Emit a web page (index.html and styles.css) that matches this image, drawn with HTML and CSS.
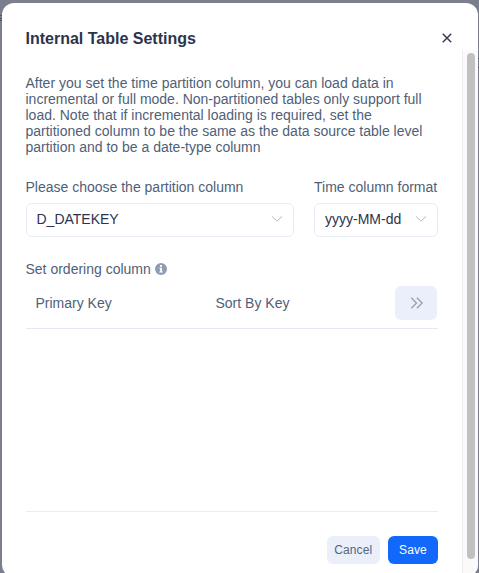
FILE: index.html
```html
<!DOCTYPE html>
<html lang="en">
<head>
<meta charset="utf-8">
<title>Internal Table Settings</title>
<link rel="stylesheet" href="styles.css">
</head>
<body>
<div class="dialog">
  <header class="header">
    <h1 class="title">Internal Table Settings</h1>
    <button class="close" aria-label="Close"><svg width="10" height="10" viewBox="0 0 10 10"><path d="M.8.8l8.4 8.4M9.2.8L.8 9.2"/></svg></button>
  </header>
  <div class="body">
    <main class="content">
      <p class="intro">After you set the time partition column, you can load data in<br>incremental or full mode. Non-partitioned tables only support full<br>load. Note that if incremental loading is required, set the<br>partitioned column to be the same as the data source table level<br>partition and to be a date-type column</p>
      <div class="fields">
        <div class="field">
          <label class="label">Please choose the partition column</label>
          <div class="select"><span>D_DATEKEY</span><svg width="12" height="8" viewBox="0 0 12 8"><path d="M.8 1.2L6 6.2l5.2-5"/></svg></div>
        </div>
        <div class="field">
          <label class="label">Time column format</label>
          <div class="select"><span>yyyy-MM-dd</span><svg width="12" height="8" viewBox="0 0 12 8"><path d="M.8 1.2L6 6.2l5.2-5"/></svg></div>
        </div>
      </div>
      <div class="ordering"><span>Set ordering column</span><svg width="12" height="12" viewBox="0 0 12 12"><circle cx="6" cy="6" r="6"/><path d="M5 2h2v1.7H5zM4.4 4.8H7v3.7h.8v1H4.3v-1h.8V5.8h-.7z"/></svg></div>
      <div class="table-head">
        <span>Primary Key</span>
        <span>Sort By Key</span>
        <button class="expand" aria-label="Expand"><svg width="14" height="12" viewBox="0 0 14 12"><path d="M2.3.8L7.5 6l-5.2 5.2M7.9.8L13.1 6l-5.2 5.2"/></svg></button>
      </div>
      <footer class="footer">
        <button class="button cancel">Cancel</button>
        <button class="button save">Save</button>
      </footer>
    </main>
    <div class="scrollbar"><div class="thumb"></div></div>
  </div>
</div>
</body>
</html>
```
FILE: styles.css
```css
* { box-sizing: border-box; }
html { overflow: hidden; }
body {
  margin: 0;
  height: 573px;
  overflow: hidden;
  padding: 2.5px 1.5px 0;
  background:
    linear-gradient(#4c5265, #4c5265) 0 15px / 2px 1px no-repeat,
    linear-gradient(#4c5265, #4c5265) 0 18px / 2px 1px no-repeat,
    linear-gradient(#4c5265, #4c5265) 0 20px / 2px 1px no-repeat,
    linear-gradient(#4c5265, #4c5265) 100% 58px / 2px 1px no-repeat,
    linear-gradient(#4c5265, #4c5265) 100% 67px / 2px 1px no-repeat,
    #7b7f8d;
  font: 14px/16px "Liberation Sans", Arial, sans-serif;
  color: #4f5f78;
}
button { border: 0; padding: 0; font-family: inherit; }
svg { display: block; fill: none; flex: none; }
.dialog {
  width: 476px;
  height: 574px;
  background: #fff;
  border-radius: 12px;
  overflow: hidden;
}
.header {
  height: 47.5px;
  padding: 24px 26px 0 24px;
  display: flex;
  justify-content: space-between;
}
.title {
  margin: 0;
  font-size: 16px;
  line-height: 24px;
  font-weight: bold;
  color: #2c344d;
}
.close { height: 23px; background: none; }
.close svg { stroke: #363e59; stroke-width: 1.5; }
.body { display: flex; height: 526.5px; }
.content { width: 460.5px; padding: 25px 24px 0; }
.intro { margin: 0; white-space: nowrap; }
.fields { display: grid; grid-template-columns: 268px 124px; gap: 20.5px; margin-top: 24px; }
.label { display: block; white-space: nowrap; }
.select {
  height: 34px;
  margin-top: 8px;
  padding: 0 10px 2px;
  border: 1px solid #e6ebf6;
  border-radius: 6px;
  display: flex;
  align-items: center;
  justify-content: space-between;
  color: #2c344d;
}
.select svg { stroke: #adb9cb; stroke-width: 1; }
.ordering { display: flex; align-items: center; gap: 4px; height: 16px; margin-top: 24px; }
.ordering circle { fill: #8f9cb5; }
.ordering path { fill: #fff; }
.table-head {
  display: grid;
  grid-template-columns: 180px 179.9px 42px;
  align-items: center;
  height: 52px;
  padding-left: 10px;
  border-bottom: 1px solid #e4e8f2;
}
.expand {
  width: 42px;
  height: 34px;
  border-radius: 6px;
  background: #eaeff9;
  display: flex;
  align-items: center;
  justify-content: center;
}
.expand svg { stroke: #929fb5; stroke-width: 1.3; }
.footer {
  margin-top: 182px;
  padding-top: 24px;
  border-top: 1px solid #e9ecf8;
  display: flex;
  justify-content: flex-end;
  gap: 8px;
}
.button { height: 28px; border-radius: 6px; font-size: 12px; letter-spacing: .1px; }
.cancel { width: 53.5px; background: #eaeff9; color: #566580; }
.save { width: 50px; background: #1268fb; color: #fff; }
.scrollbar {
  width: 15.5px;
  padding: 3px 3px 0 4px;
  background: #fafafa;
  border-left: 1px solid #eee;
}
.thumb { width: 8px; height: 506px; border-radius: 4px; background: #c1c1c1; }
```
